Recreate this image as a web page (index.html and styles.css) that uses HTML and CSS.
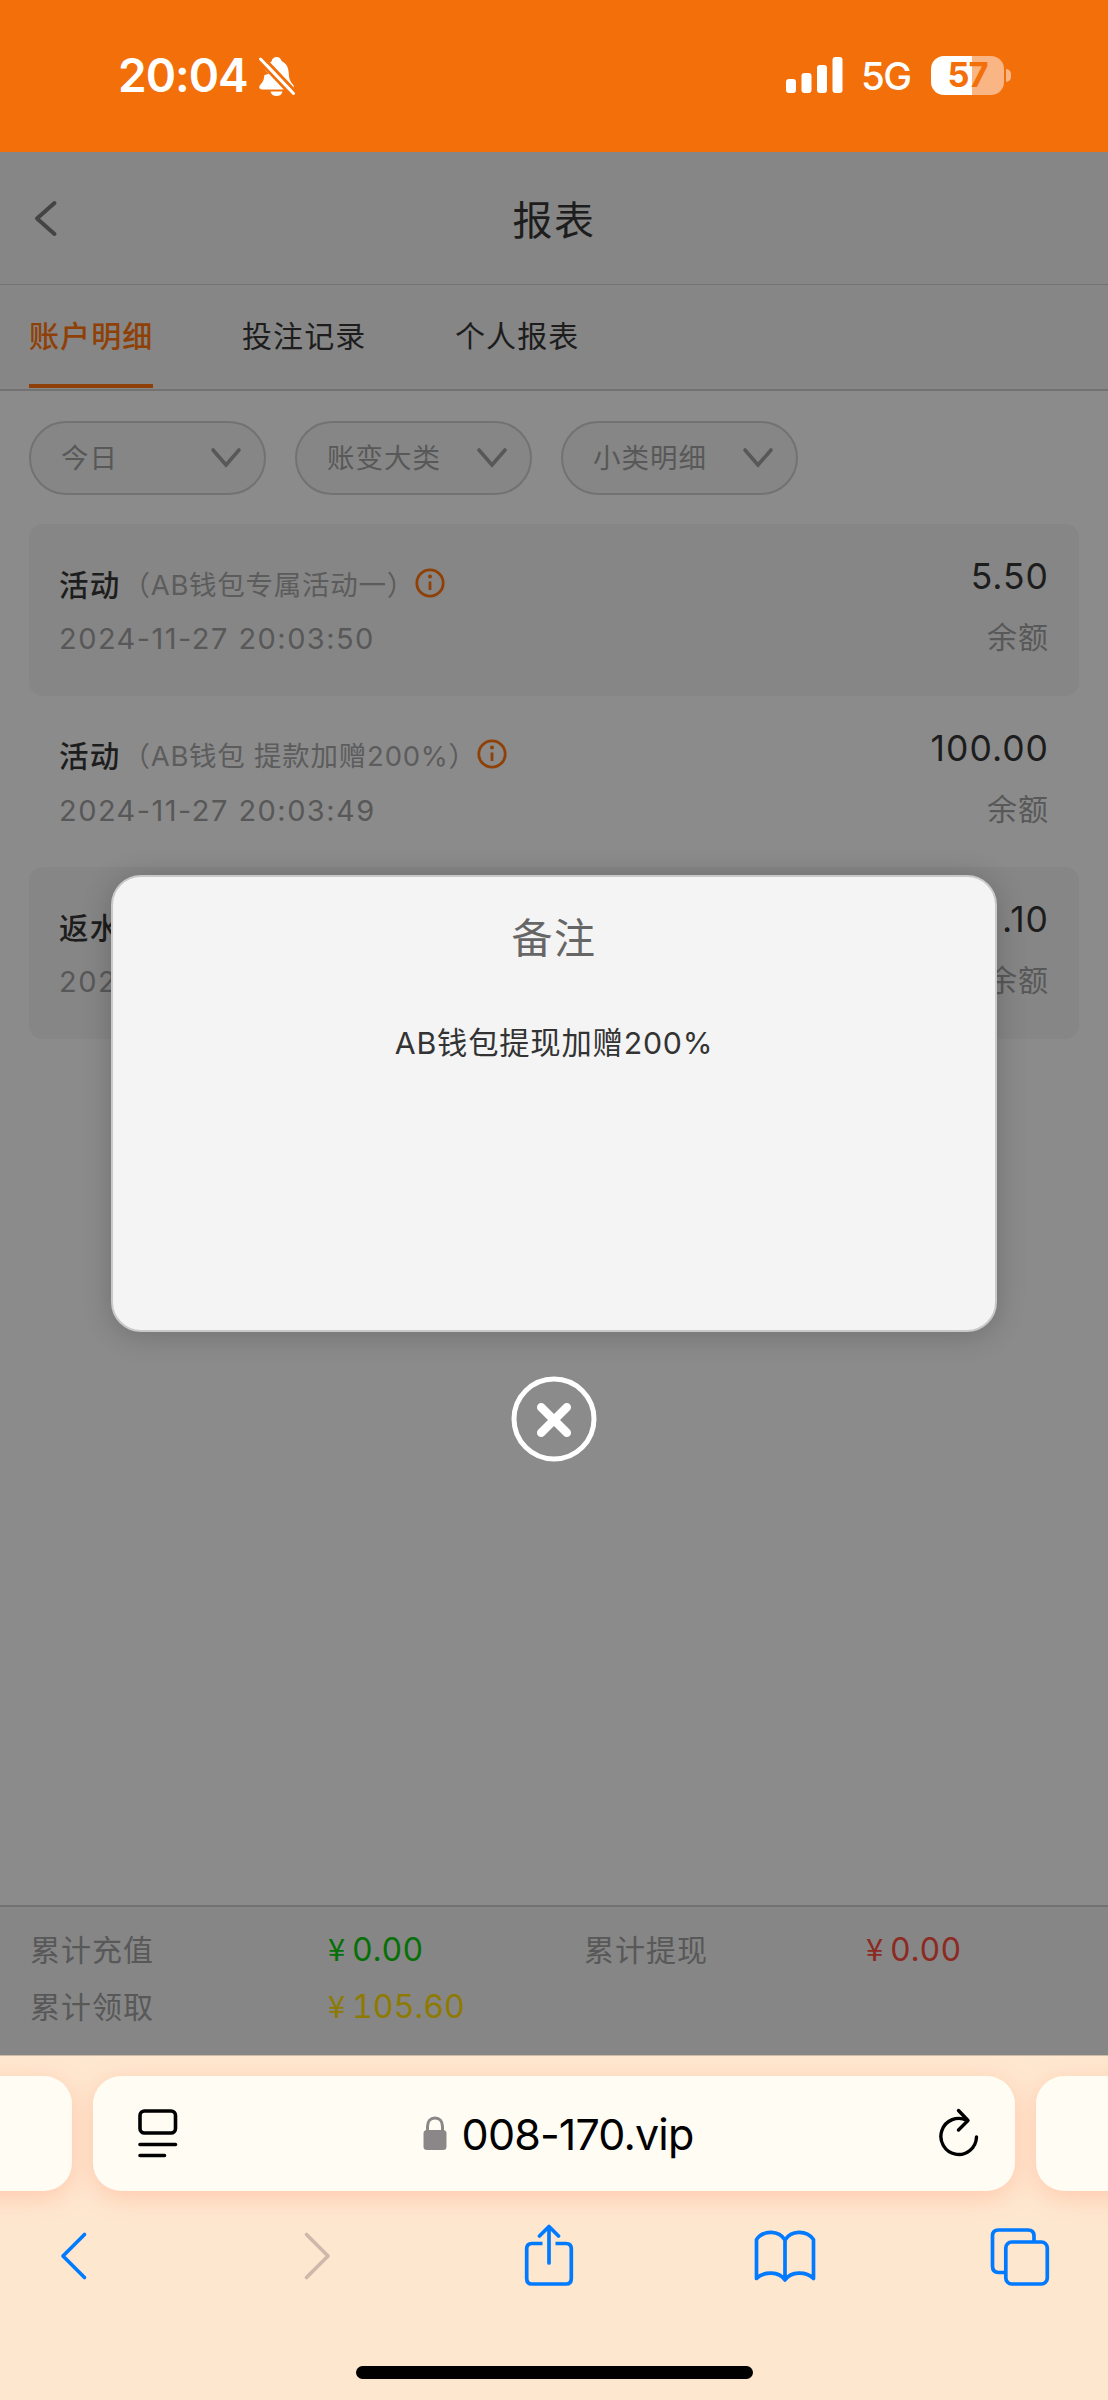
FILE: index.html
```html
<!DOCTYPE html>
<html lang="zh-CN">
<head>
<meta charset="utf-8">
<title>报表</title>
<link rel="stylesheet" href="styles.css">
</head>
<body>
<div class="phone">
  <div class="status">
    <div class="status-left">
      <span class="clock">20:04</span>
      <svg class="bell" width="38" height="42" viewBox="0 0 38 42">
        <path fill="#fff" d="M13.500 6.500C14 3.500 16 2 18.500 2S23 3.500 23.800 6.200C29 8.500 30.500 13 30.800 19C31 24.500 33 27.500 35 29.500C36.500 31 36 34.500 33.500 34.500H4C1 34.500 0.500 31.500 2.500 29.500C5.500 26.500 6.300 23.500 6.500 18C6.700 12 8.700 8.800 13.500 6.500Z"/>
        <path fill="#fff" d="M12.500 36.500H24.500C24 39.500 21.500 41 18.500 41S13 39.500 12.500 36.500Z"/>
        <path d="M0 5L35 42M4 1L38 37" stroke="#f36f09" stroke-width="3"/>
        <path d="M2.500 4L35.500 38.500" stroke="#fff" stroke-width="3" stroke-linecap="round"/>
        <path fill="#f36f09" d="M0 7.500L11 19L6 20L0 22ZM4 0H12L11 6L9 6Z"/>
      </svg>
    </div>
    <div class="status-right">
      <svg class="signal" width="57" height="36" viewBox="0 0 57 36" fill="#fff">
        <rect x="0" y="22" width="10" height="14" rx="3"/><rect x="15.500" y="16" width="10" height="20" rx="3"/><rect x="31" y="8" width="10" height="28" rx="3"/><rect x="46.500" y="0" width="10" height="36" rx="3"/>
      </svg>
      <span class="net">5G</span>
      <div class="battery">57</div>
      <div class="nub"></div>
    </div>
  </div>

  <div class="header">
    <svg class="back" width="24" height="38" viewBox="0 0 24 38"><path d="M20.500 3L3 18.500L20.500 34" fill="none" stroke="#444" stroke-width="4" stroke-linecap="round" stroke-linejoin="round"/></svg>
    <h1 class="title">报表</h1>
  </div>
  <div class="tabs">
    <div class="tab active">账户明细</div>
    <div class="tab">投注记录</div>
    <div class="tab">个人报表</div>
  </div>

  <div class="content">
    <div class="filters">
      <div class="filter"><span>今日</span><svg width="32" height="22" viewBox="0 0 32 22"><path d="M3 3L16 18L29 3"/></svg></div>
      <div class="filter"><span>账变大类</span><svg width="32" height="22" viewBox="0 0 32 22"><path d="M3 3L16 18L29 3"/></svg></div>
      <div class="filter"><span>小类明细</span><svg width="32" height="22" viewBox="0 0 32 22"><path d="M3 3L16 18L29 3"/></svg></div>
    </div>
    <div class="list">
      <div class="row shaded">
        <div class="info">
          <div class="line"><span class="kind">活动</span><span class="note">（AB钱包专属活动一）</span><svg class="tip" width="30" height="30" viewBox="0 0 30 30"><circle cx="15" cy="15" r="13.200"/><path d="M15 13.500V22"/><circle class="dot" cx="15" cy="8.500" r="2"/></svg></div>
          <div class="date">2024-11-27 20:03:50</div>
        </div>
        <div class="sum"><div class="amount">5.50</div><div class="balance">余额</div></div>
      </div>
      <div class="row">
        <div class="info">
          <div class="line"><span class="kind">活动</span><span class="note">（AB钱包 提款加赠200%）</span><svg class="tip" width="30" height="30" viewBox="0 0 30 30"><circle cx="15" cy="15" r="13.200"/><path d="M15 13.500V22"/><circle class="dot" cx="15" cy="8.500" r="2"/></svg></div>
          <div class="date">2024-11-27 20:03:49</div>
        </div>
        <div class="sum"><div class="amount">100.00</div><div class="balance">余额</div></div>
      </div>
      <div class="row shaded">
        <div class="info">
          <div class="line"><span class="kind">返水</span></div>
          <div class="date">202</div>
        </div>
        <div class="sum"><div class="amount">.10</div><div class="balance">余额</div></div>
      </div>
    </div>
  </div>

  <div class="totals">
    <span class="label">累计充值</span><span class="money green"><i>¥</i>0.00</span>
    <span class="label">累计提现</span><span class="money red"><i>¥</i>0.00</span>
    <span class="label">累计领取</span><span class="money gold"><i>¥</i>105.60</span>
  </div>

  <div class="browser">
    <div class="pages">
      <div class="page side"></div>
      <div class="page address">
        <svg width="40" height="50" viewBox="0 0 40 50" fill="none" stroke="#000" stroke-width="3.600" stroke-linecap="round"><rect x="2" y="2" width="35.500" height="22" rx="4.500"/><path d="M2 35.500H37.500M2 46.500H26.500"/></svg>
        <div class="url">
          <svg width="24" height="35" viewBox="0 0 24 35"><rect x="0.500" y="14" width="23" height="20" rx="3.500" fill="#8b8789"/><path d="M4.500 15V10.500C4.500 5 7.500 2 12 2S19.500 5 19.500 10.500V15" fill="none" stroke="#8b8789" stroke-width="3"/></svg>
          <span>008-170.vip</span>
        </div>
        <svg width="42" height="52" viewBox="0 0 42 52" fill="none" stroke="#000" stroke-width="3.400" stroke-linecap="round" stroke-linejoin="round"><path d="M38.500 29A17.800 18 0 1 1 29 12.500"/><path d="M20.500 2.500L30 12.500L20.500 22"/></svg>
      </div>
      <div class="page side"></div>
    </div>
    <div class="tools">
      <svg width="64" height="64" viewBox="-17 0 64 64"><path d="M25.500 10.500L4 32L25.500 53.500"/></svg>
      <svg class="off" width="64" height="64" viewBox="-23 0 64 64"><path d="M4.500 10.500L26 32L4.500 53.500"/></svg>
      <svg width="64" height="64" viewBox="-8 0 64 64"><path stroke-linecap="butt" d="M19.500 19.500H9Q3.700 19.500 3.700 25V54.500Q3.700 60 9 60H43Q48.300 60 48.300 54.500V25Q48.300 19.500 43 19.500H32.500"/><path d="M26 39V3M16.500 12L26 2.500L35.500 12"/></svg>
      <svg width="64" height="64" viewBox="-1 0 64 64"><path d="M32 16C26 6.500 11 5.500 3.500 15.500V54.500C11 47 26 47 32 56C38 47 53 47 60.500 54.500V15.500C53 5.500 38 6.500 32 16V55"/></svg>
      <svg width="64" height="64" viewBox="-1.5 0 64 64"><path stroke-linecap="butt" d="M44.500 18V12Q44.500 6 38.500 6H9Q3 6 3 12V42Q3 48.500 9 48.500H15"/><rect x="16.300" y="18" width="41.500" height="42" rx="6"/></svg>
    </div>
    <div class="home"></div>
  </div>

  <div class="dialog">
    <h2>备注</h2>
    <p>AB钱包提现加赠200%</p>
  </div>
  <svg class="close" width="88" height="88" viewBox="0 0 88 88" fill="none" stroke="#fff"><circle cx="44" cy="44" r="40" stroke-width="5"/><path d="M31.200 32.200L56.800 57.800M56.800 32.200L31.200 57.800" stroke-width="8.500" stroke-linecap="round"/></svg>
</div>
</body>
</html>
```
FILE: styles.css
```css
* { box-sizing: border-box; }
body { margin: 0; font-family: Inter, "Noto Sans CJK SC", sans-serif; }
svg { display: block; flex: none; }
h1, h2, p { margin: 0; font-weight: 400; }

.phone {
  position: relative;
  width: 1108px;
  height: 2400px;
  display: flex;
  flex-direction: column;
  overflow: hidden;
  background: #8b8b8b;
}

.status {
  height: 152px;
  flex: none;
  display: flex;
  justify-content: space-between;
  padding: 54px 97px 0 118px;
  background: #f36f09;
  color: #fff;
}
.status-left, .status-right { display: flex; height: 42px; align-items: center; }
.clock { width: 140px; font-size: 46px; font-weight: 600; line-height: 42px; letter-spacing: -1px; }
.bell { margin-top: 1px; }
.net { width: 70px; margin-left: 18px; font-size: 38.500px; font-weight: 500; line-height: 42px; letter-spacing: -1.500px; padding-top: 2px; }
.battery {
  width: 73px;
  height: 39px;
  border-radius: 13px;
  background: linear-gradient(90deg, #fff 41px, #f9b684 41px);
  color: #f36f09;
  font-size: 34.500px;
  font-weight: 700;
  line-height: 38px;
  text-align: center;
  letter-spacing: -1px;
}
.nub { width: 5px; height: 13px; margin-left: 2px; border-radius: 0 6px 6px 0; background: #f9b684; }

.header {
  height: 133px;
  flex: none;
  display: grid;
  grid-template-columns: 200px 1fr 200px;
  align-items: center;
  border-bottom: 1px solid #727272;
  background: #868686;
}
.back { margin: 2px 0 0 34px; }
.title { padding-top: 6px; text-align: center; font-size: 40px; line-height: 60px; letter-spacing: 1.500px; color: #1d1d1d; }

.tabs {
  height: 106px;
  flex: none;
  display: flex;
  gap: 89px;
  padding: 0 29px;
  border-bottom: 2.500px solid #727272;
  background: #868686;
}
.tab { height: 103px; width: 124px; font-size: 30px; letter-spacing: 1.100px; line-height: 102px; white-space: nowrap; color: #1d1d1d; }
.active { color: #8f4006; border-bottom: 4px solid #8f4006; font-weight: 500; }

.content { flex: 1; padding: 30px 29px 0; }
.filters { display: flex; gap: 29px; margin-bottom: 29px; }
.filter {
  width: 237px;
  height: 74px;
  display: flex;
  justify-content: space-between;
  align-items: center;
  padding: 0 22px 0 30px;
  border: 2.500px solid #727272;
  border-radius: 37px;
  background: #868686;
  font-size: 27.500px;
  letter-spacing: 1px;
  color: #585858;
}
.filter span { padding-bottom: 4px; }
.filter svg { fill: none; stroke: #585858; stroke-width: 3.600; stroke-linecap: round; }

.row { height: 171.700px; display: flex; justify-content: space-between; padding: 28px 30px 0 30px; border-radius: 14px; }
.shaded { background: #868686; }
.line { height: 61px; display: flex; align-items: center; }
.kind { font-size: 29.500px; letter-spacing: 1.200px; color: #1d1d1d; font-weight: 500; }
.note { margin-left: 2px; font-size: 27.500px; letter-spacing: 0.750px; color: #5c5c5c; white-space: pre; }
.tip { fill: none; stroke: #8f4006; stroke-width: 2.800; }
.tip .dot { fill: #8f4006; stroke: none; }
.date { font-size: 29px; line-height: 52px; letter-spacing: 1.450px; color: #585858; }
.sum { text-align: right; }
.amount { font-size: 35.500px; line-height: 50px; letter-spacing: 1px; color: #1d1d1d; }
.balance { font-size: 30px; line-height: 70px; letter-spacing: 1px; color: #585858; }

.totals {
  height: 150px;
  flex: none;
  display: grid;
  grid-template-columns: 298px 256px 282px 1fr;
  grid-auto-rows: 57px;
  align-items: center;
  padding: 12px 0 0 30px;
  border-top: 2.500px solid #727272;
  background: #868686;
}
.label { font-size: 30px; letter-spacing: 1px; color: #585858; }
.money { font-size: 32px; letter-spacing: 0.100px; font-variant-numeric: tabular-nums; }
.money i { display: inline-block; width: 24px; font: 31px "Noto Sans CJK SC", sans-serif; letter-spacing: 0; }
.green { color: #066f06; }
.red { color: #8c2a22; }
.gold { color: #8e7a00; }

.browser { height: 345px; flex: none; background: #fee7cf; border-top: 1px solid #cbbba8; }
.pages { display: flex; justify-content: center; gap: 21px; padding-top: 20px; }
.page { height: 115px; flex: none; border-radius: 28px; background: #fffcf4; box-shadow: 0 6px 26px #ffc9ad; }
.side { width: 300px; }
.address { width: 922px; display: flex; align-items: center; justify-content: space-between; padding: 0 35px 0 45px; }
.url { display: flex; align-items: center; gap: 15px; font-size: 43px; letter-spacing: -0.850px; color: #000; }
.tools { display: flex; justify-content: space-between; padding: 33px 56px 0 42px; }
.tools svg { fill: none; stroke: #007aff; stroke-width: 3.700; stroke-linecap: round; stroke-linejoin: round; }
.tools .off { stroke: #cdb8ab; }
.home { width: 397px; height: 13px; margin: 78px auto 0; border-radius: 7px; background: #000; }

.dialog {
  position: absolute;
  left: 111px;
  top: 875px;
  width: 886px;
  height: 457px;
  border: 2.500px solid #c9c9c9;
  border-radius: 30px;
  background: #f4f4f4;
  box-shadow: 0 3px 30px rgba(0, 0, 0, 0.2);
  text-align: center;
}
.dialog h2 { padding-top: 30px; font-size: 41px; line-height: 62px; letter-spacing: 1.500px; color: #666; }
.dialog p { padding-top: 49px; font-size: 30.300px; line-height: 50px; letter-spacing: 0.800px; color: #333; }
.close { position: absolute; left: 510px; top: 1374.500px; }
```
